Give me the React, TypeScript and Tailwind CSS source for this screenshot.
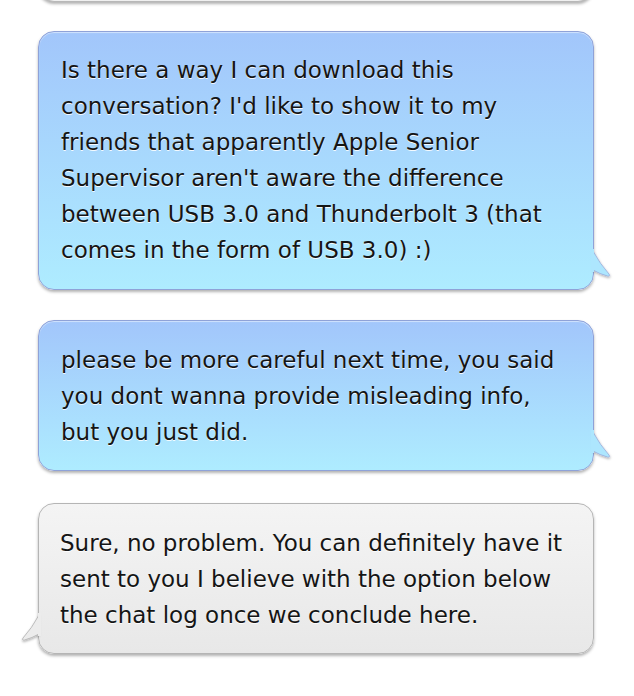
import React from "react";

const font = { fontFamily: '"DejaVu Sans", "Noto Sans", sans-serif' };

function RightTail({ grad }: { grad: string }) {
  return (
    <svg
      className="absolute right-[-20px] bottom-[6px]"
      width="22"
      height="32"
      viewBox="0 0 22 32"
      style={{ overflow: "visible" }}
    >
      <defs>
        <filter id={"ts" + grad} x="-50%" y="-50%" width="200%" height="200%">
          <feDropShadow dx="0.5" dy="1.5" stdDeviation="1.2" floodColor="#000" floodOpacity="0.3" />
        </filter>
      </defs>
      <path
        d="M2 0 Q 9 13 18 23 Q 19.5 25.5 16.5 25 Q 9 23 2 19 Z"
        fill="#ade6fe"
        stroke="#97acdc"
        strokeWidth="0.8"
        filter={"url(#ts" + grad + ")"}
      />
      <rect x="0" y="-2" width="3" height="23" fill="#ade6fe" />
    </svg>
  );
}

function LeftTail() {
  return (
    <svg
      className="absolute left-[-20px] bottom-[6px]"
      width="22"
      height="32"
      viewBox="0 0 22 32"
      style={{ overflow: "visible" }}
    >
      <defs>
        <filter id="tsg" x="-50%" y="-50%" width="200%" height="200%">
          <feDropShadow dx="0" dy="1.5" stdDeviation="1.2" floodColor="#000" floodOpacity="0.3" />
        </filter>
      </defs>
      <path
        d="M20 0 Q 13 13 4 23 Q 2.5 25.5 5.5 25 Q 13 23 20 19 Z"
        fill="#ececec"
        stroke="#b0b0b0"
        strokeWidth="0.8"
        filter="url(#tsg)"
      />
      <rect x="19" y="-2" width="3" height="23" fill="#ececec" />
    </svg>
  );
}

const textCls =
  "text-[23px] leading-[36px] text-[#151515] whitespace-nowrap [text-shadow:0_1px_0_rgba(255,255,255,0.9)]";

export default function App() {
  return (
    <div className="w-[634px] h-[696px] bg-white overflow-hidden" style={font}>
      <div className="flex flex-col pl-[38px] pr-[40px]">
        <div className="h-[40px] mt-[-38px] rounded-[16px] border border-[#b8b8b8] bg-[#f0f0f0] shadow-[0_2px_3px_rgba(0,0,0,0.3)]" />

        <div className="relative mt-[29px] rounded-[16px] border border-[#8fa2d8] bg-gradient-to-b from-[#a2c6fb] to-[#aeecff] shadow-[0_2px_3px_rgba(0,0,0,0.3),inset_0_1px_1px_rgba(255,255,255,0.5)] pl-[22px] pr-[10px] pt-[20px] pb-[21px]">
          <RightTail grad="a" />
          <div className={textCls}>
            Is there a way I can download this
            <br />
            conversation? I'd like to show it to my
            <br />
            friends that apparently Apple Senior
            <br />
            Supervisor aren't aware the difference
            <br />
            between USB 3.0 and Thunderbolt 3 (that
            <br />
            comes in the form of USB 3.0) :)
          </div>
        </div>

        <div className="relative mt-[30px] rounded-[16px] border border-[#8fa2d8] bg-gradient-to-b from-[#a2c6fb] to-[#aeecff] shadow-[0_2px_3px_rgba(0,0,0,0.3),inset_0_1px_1px_rgba(255,255,255,0.5)] pl-[22px] pr-[10px] pt-[21px] pb-[20px]">
          <RightTail grad="b" />
          <div className={textCls}>
            please be more careful next time, you said
            <br />
            you dont wanna provide misleading info,
            <br />
            but you just did.
          </div>
        </div>

        <div className="relative mt-[32px] rounded-[16px] border border-[#b5b5b5] bg-gradient-to-b from-[#f4f4f4] to-[#e8e8e8] shadow-[0_2px_3px_rgba(0,0,0,0.3)] pl-[21px] pr-[10px] pt-[21px] pb-[20px]">
          <LeftTail />
          <div className={textCls}>
            Sure, no problem. You can definitely have it
            <br />
            sent to you I believe with the option below
            <br />
            the chat log once we conclude here.
          </div>
        </div>
      </div>
    </div>
  );
}
